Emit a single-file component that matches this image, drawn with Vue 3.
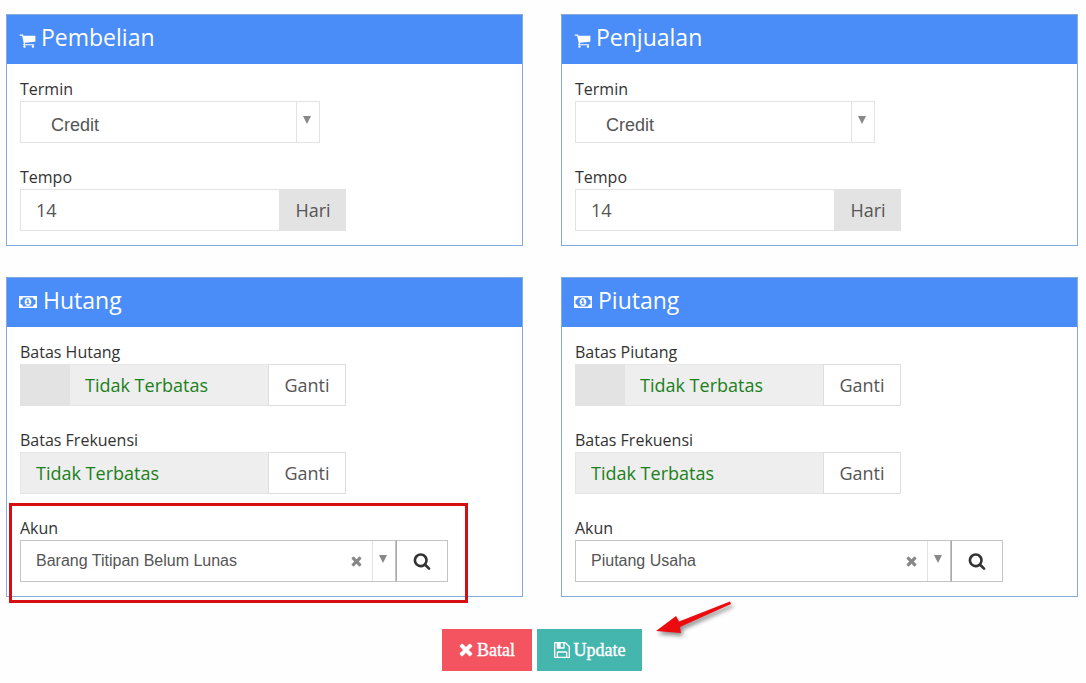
<script setup>
import { ref } from 'vue'

const terms = [
  { id: 'pembelian', title: 'Pembelian', termin: ref('Credit'), tempo: ref('14') },
  { id: 'penjualan', title: 'Penjualan', termin: ref('Credit'), tempo: ref('14') },
]
const limits = [
  { id: 'hutang', title: 'Hutang', akun: 'Barang Titipan Belum Lunas', highlight: true },
  { id: 'piutang', title: 'Piutang', akun: 'Piutang Usaha', highlight: false },
]
</script>

<template>
  <main class="page">
    <div class="cards">
      <section v-for="t in terms" :key="t.id" class="card">
        <h2 class="head">
          <svg class="cart" viewBox="0 0 1792 1792" aria-hidden="true"><path d="M704 1536q0 52-38 90t-90 38-90-38-38-90 38-90 90-38 90 38 38 90zm896 0q0 52-38 90t-90 38-90-38-38-90 38-90 90-38 90 38 38 90zm128-1088v512q0 24-16.5 42.5t-40.5 21.5l-1044 122q13 60 13 70 0 16-24 64h920q26 0 45 19t19 45-19 45-45 19h-1024q-26 0-45-19t-19-45q0-11 8-31.5t16-36 21.5-40 15.5-29.5l-177-823h-204q-26 0-45-19t-19-45 19-45 45-19h256q16 0 28.5 6.5t19.5 15.5 13 24.5 8 26 5.5 29.5 4.5 26h1201q26 0 45 19t19 45z" /></svg>
          <span>{{ t.title }}</span>
        </h2>
        <div class="body">
          <div class="field">
            <label :for="t.id + '-termin'">Termin</label>
            <div class="control pick pick-term">
              <select :id="t.id + '-termin'" v-model="t.termin.value">
                <option>Credit</option>
                <option>Cash</option>
              </select>
              <span class="arrow"><svg viewBox="0 0 8 8" aria-hidden="true"><path d="M0 0h8L4 8z" /></svg></span>
            </div>
          </div>
          <div class="field">
            <label :for="t.id + '-tempo'">Tempo</label>
            <div class="control group">
              <input :id="t.id + '-tempo'" v-model="t.tempo.value" type="text" />
              <span class="addon">Hari</span>
            </div>
          </div>
        </div>
      </section>

      <section v-for="l in limits" :key="l.id" class="card">
        <h2 class="head">
          <svg class="money" viewBox="0 0 18 12" aria-hidden="true">
            <path fill-rule="evenodd" d="M0 0h18v12H0zM4 1.5A2.6 2.6 0 0 1 1.5 4v4A2.6 2.6 0 0 1 4 10.500h10A2.600 2.600 0 0 1 16.500 8V4A2.600 2.600 0 0 1 14 1.500z" />
            <path fill-rule="evenodd" d="M9 2c2 0 3.400 1.800 3.400 4S11 10 9 10 5.600 8.200 5.600 6 7 2 9 2zM8.600 3.600L7.200 4.800l.5.600.6-.4v2.300h-.9v1h3.200v-1h-.9V3.600z" />
          </svg>
          <span>{{ l.title }}</span>
        </h2>
        <div class="body">
          <div class="field">
            <label :for="l.id + '-batas'">Batas {{ l.title }}</label>
            <div class="control group">
              <span class="prefix"></span>
              <input :id="l.id + '-batas'" class="locked" type="text" value="Tidak Terbatas" readonly />
              <button type="button" class="change">Ganti</button>
            </div>
          </div>
          <div class="field">
            <label :for="l.id + '-frekuensi'">Batas Frekuensi</label>
            <div class="control group">
              <input :id="l.id + '-frekuensi'" class="locked" type="text" value="Tidak Terbatas" readonly />
              <button type="button" class="change">Ganti</button>
            </div>
          </div>
          <div class="field account">
            <label :for="l.id + '-akun'">Akun</label>
            <div class="control account-row">
              <div class="pick pick-account">
                <select :id="l.id + '-akun'">
                  <option>{{ l.akun }}</option>
                </select>
                <button type="button" class="clear" aria-label="Hapus">
                  <svg viewBox="236 302 1320 1320" aria-hidden="true"><path d="M1490 1322q0 40-28 68l-136 136q-28 28-68 28t-68-28l-294-294-294 294q-28 28-68 28t-68-28l-136-136q-28-28-28-68t28-68l294-294-294-294q-28-28-28-68t28-68l136-136q28-28 68-28t68 28l294 294 294-294q28-28 68-28t68 28l136 136q28 28 28 68t-28 68l-294 294 294 294q28 28 28 68z" /></svg>
                </button>
                <span class="arrow"><svg viewBox="0 0 8 8" aria-hidden="true"><path d="M0 0h8L4 8z" /></svg></span>
              </div>
              <button type="button" class="search" aria-label="Cari">
                <svg viewBox="0 0 1792 1792" aria-hidden="true"><path d="M1216 832q0-185-131.500-316.500t-316.500-131.500-316.500 131.500-131.500 316.500 131.500 316.500 316.500 131.500 316.500-131.500 131.500-316.500zm512 832q0 52-38 90t-90 38q-54 0-90-38l-343-342q-179 124-399 124-143 0-273.500-55.500t-225-150-150-225-55.500-273.500 55.500-273.500 150-225 225-150 273.500-55.500 273.500 55.500 225 150 150 225 55.500 273.500q0 220-124 399l343 343q37 37 37 90z" /></svg>
              </button>
            </div>
            <span v-if="l.highlight" class="marker"></span>
          </div>
        </div>
      </section>
    </div>

    <div class="actions">
      <button type="button" class="btn cancel">
        <svg viewBox="236 302 1320 1320" aria-hidden="true"><path d="M1490 1322q0 40-28 68l-136 136q-28 28-68 28t-68-28l-294-294-294 294q-28 28-68 28t-68-28l-136-136q-28-28-28-68t28-68l294-294-294-294q-28-28-28-68t28-68l136-136q28-28 68-28t68 28l294 294 294-294q28-28 68-28t68 28l136 136q28 28 28 68t-28 68l-294 294 294 294q28 28 28 68z" /></svg>
        <span>Batal</span>
      </button>
      <div class="update-wrap">
        <button type="button" class="btn update">
          <svg viewBox="128 128 1536 1536" aria-hidden="true"><path d="M512 1536h768v-384h-768v384zm896 0h128v-896q0-14-10-38.500t-20-34.500l-281-281q-10-10-34-20t-39-10v416q0 40-28 68t-68 28h-576q-40 0-68-28t-28-68v-416h-128v1280h128v-416q0-40 28-68t68-28h832q40 0 68 28t28 68v416zm-384-928v-320q0-13-9.500-22.500t-22.500-9.500h-192q-13 0-22.500 9.500t-9.500 22.500v320q0 13 9.500 22.500t22.500 9.500h192q13 0 22.500-9.500t9.500-22.500zm640 32v928q0 40-28 68t-68 28h-1344q-40 0-68-28t-28-68v-1344q0-40 28-68t68-28h928q40 0 88 20t76 48l280 280q28 28 48 76t20 88z" /></svg>
          <span>Update</span>
        </button>
        <svg class="pointer" viewBox="0 0 84 44" aria-hidden="true">
          <path d="M76 4.500L25 24.500L22 19L2 34L27 36L26 30L77 7z" />
        </svg>
      </div>
    </div>
  </main>
</template>

<style>
body {
  margin: 0;
  background: #fefefe;
}
</style>

<style scoped>
* {
  box-sizing: border-box;
}
.page {
  padding: 14px 8px 12px 6px;
  font-family: "Open Sans", "Noto Sans", sans-serif;
  color: #333;
}
.page button,
.page input,
.page select {
  margin: 0;
  font-family: inherit;
  border-radius: 0;
}
svg {
  display: block;
  flex: none;
  fill: currentColor;
}
.cards {
  display: grid;
  grid-template-columns: 1fr 1fr;
  gap: 31px 38px;
}
.card {
  border: 1px solid #84abd9;
  background: #fff;
}
.head {
  display: flex;
  align-items: center;
  height: 49px;
  margin: 0;
  padding: 0 12px 5px;
  background: #4a8cf8;
  color: #fff;
  font-size: 23px;
  font-weight: 400;
  line-height: 32px;
}
.cart {
  width: 17px;
  height: 17px;
  margin: 6px 5px 0 0;
}
.money {
  width: 18px;
  height: 12px;
  margin: 4px 6px 0 0;
}
.body {
  display: flex;
  flex-direction: column;
  gap: 22px;
  padding: 13px 13px 14px;
}
.field label {
  display: block;
  font-size: 16px;
  line-height: 24px;
}
.control {
  display: flex;
  height: 42px;
}
.group {
  max-width: 326px;
}
.pick {
  display: flex;
  background: #fff;
  border: 1px solid #e3e3e3;
}
.pick-term {
  max-width: 300px;
}
.page .pick select {
  flex: 1;
  min-width: 0;
  appearance: none;
  border: 0;
  background: transparent;
  color: #555;
  font-family: "Liberation Sans", Arial, sans-serif;
}
.page .pick-term select {
  padding: 5px 0 0 30px;
  font-size: 18px;
}
.page .pick-account select {
  padding: 0 0 2px 15px;
  font-size: 16px;
}
.arrow {
  width: 23px;
  padding: 14px 0 0 6px;
  border-left: 1px solid #e3e3e3;
  color: #888;
}
.arrow svg {
  width: 8px;
  height: 8px;
}
.group input {
  flex: 1;
  min-width: 0;
  padding: 0 15px;
  border: 1px solid #e3e3e3;
  background: #fff;
  color: #555;
  font-size: 18px;
}
.group input.locked {
  border-color: #e6e6e6;
  border-right: 0;
  background: #eee;
  color: #1a801a;
}
.prefix {
  width: 50px;
  background: #e3e3e3;
}
.prefix + .locked {
  border-left: 0;
}
.addon {
  display: flex;
  align-items: center;
  justify-content: center;
  width: 66px;
  background: #e3e3e3;
  color: #555;
  font-size: 18px;
}
.change {
  width: 78px;
  padding: 0;
  border: 1px solid #ddd;
  background: #fff;
  color: #555;
  font-size: 18px;
}
.account {
  position: relative;
}
.account-row {
  max-width: 428px;
}
.pick-account {
  flex: 1;
  min-width: 0;
  border-color: #c4c4c4;
}
.clear {
  width: 32px;
  padding: 0 0 0 11px;
  border: 0;
  background: transparent;
  color: #888;
}
.clear svg {
  width: 11px;
  height: 11px;
}
.search {
  display: flex;
  align-items: center;
  justify-content: center;
  width: 52px;
  padding: 0;
  border: 1px solid #c4c4c4;
  border-left-color: #aaa;
  background: #fff;
  color: #333;
}
.search svg {
  width: 18px;
  height: 18px;
}
.marker {
  position: absolute;
  top: -13px;
  left: -11px;
  width: 459px;
  height: 100px;
  border: 3px solid #d60e14;
  pointer-events: none;
}
.actions {
  display: flex;
  justify-content: center;
  gap: 5px;
  margin-top: 32px;
}
.btn {
  display: flex;
  align-items: center;
  justify-content: center;
  gap: 4px;
  height: 42px;
  padding: 0;
  border: 0;
  color: #fff;
  font-size: 18px;
}
.page .btn {
  font-family: "Liberation Serif", "Times New Roman", serif;
  -webkit-text-stroke: 0.4px currentColor;
}
.cancel {
  width: 90px;
  background: #f4545f;
}
.cancel svg {
  width: 14px;
  height: 14px;
}
.update {
  width: 105px;
  background: #45b6ad;
}
.update svg {
  width: 16px;
  height: 16px;
}
.update-wrap {
  position: relative;
}
.pointer {
  position: absolute;
  top: -32px;
  left: 117px;
  width: 84px;
  height: 44px;
  fill: #ec0c10;
  filter: drop-shadow(2px 3px 2px rgba(0, 0, 0, 0.45));
  pointer-events: none;
}
</style>
